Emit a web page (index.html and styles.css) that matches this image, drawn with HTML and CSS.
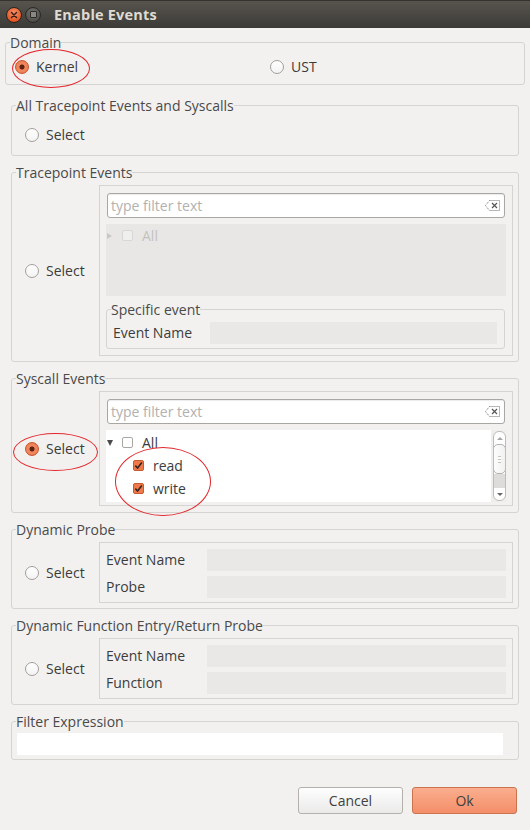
FILE: index.html
```html
<!DOCTYPE html>
<html>
<head>
<meta charset="utf-8">
<title>Enable Events</title>
<link rel="stylesheet" href="styles.css">
</head>
<body>
<div class="window">
  <div class="titlebar">
    <span class="wbtn close"><svg width="8" height="8" viewBox="0 0 8 8"><path d="M1.5 1.5 L6.5 6.5 M6.5 1.5 L1.5 6.5" stroke="#3b2119" stroke-width="1.5" stroke-linecap="round"/></svg></span>
    <span class="wbtn max"><span class="maxsq"></span></span>
    <span class="title">Enable Events</span>
  </div>

  <fieldset class="group domain">
    <legend>Domain</legend>
    <div class="domain-row">
      <label class="radio-item"><span class="radio checked"></span>Kernel</label>
      <label class="radio-item"><span class="radio"></span>UST</label>
    </div>
  </fieldset>

  <div class="groups">
    <fieldset class="group">
      <legend>All Tracepoint Events and Syscalls</legend>
      <div class="single-row">
        <label class="radio-item"><span class="radio"></span>Select</label>
      </div>
    </fieldset>

    <fieldset class="group">
      <legend>Tracepoint Events</legend>
      <div class="split">
        <div class="select-cell"><label class="radio-item"><span class="radio"></span>Select</label></div>
        <div class="panel">
          <div class="filter">
            <span class="placeholder">type filter text</span>
            <svg class="clear" width="15" height="11" viewBox="0 0 15 11"><path d="M4.5 0.5 H14.5 V10.5 H4.5 L0.5 5.5 Z" fill="none" stroke="#6e6e6e" stroke-dasharray="1 1"/><path d="M7 3 L12 8 M12 3 L7 8" stroke="#555" stroke-width="1.2"/></svg>
          </div>
          <div class="tree disabled">
            <div class="row"><span class="twisty right"></span><span class="cb dim"></span><span class="dimtext">All</span></div>
          </div>
          <fieldset class="group specific">
            <legend>Specific event</legend>
            <div class="field-row">
              <span class="lbl">Event Name</span>
              <span class="field"></span>
            </div>
          </fieldset>
        </div>
      </div>
    </fieldset>

    <fieldset class="group">
      <legend>Syscall Events</legend>
      <div class="split syscall">
        <div class="select-cell"><label class="radio-item"><span class="radio checked"></span>Select</label></div>
        <div class="panel tight">
          <div class="filter">
            <span class="placeholder">type filter text</span>
            <svg class="clear" width="15" height="11" viewBox="0 0 15 11"><path d="M4.5 0.5 H14.5 V10.5 H4.5 L0.5 5.5 Z" fill="none" stroke="#6e6e6e" stroke-dasharray="1 1"/><path d="M7 3 L12 8 M12 3 L7 8" stroke="#555" stroke-width="1.2"/></svg>
          </div>
          <div class="tree active">
            <div class="list">
              <div class="row"><span class="twisty down"></span><span class="cb"></span><span>All</span></div>
              <div class="row child"><span class="cb checked"><svg width="11" height="11" viewBox="0 0 11 11"><path d="M2.3 5.6 L4.6 8 L8.8 2.6" fill="none" stroke="#33251f" stroke-width="1.6"/></svg></span><span>read</span></div>
              <div class="row child"><span class="cb checked"><svg width="11" height="11" viewBox="0 0 11 11"><path d="M2.3 5.6 L4.6 8 L8.8 2.6" fill="none" stroke="#33251f" stroke-width="1.6"/></svg></span><span>write</span></div>
            </div>
            <div class="sbar-col">
              <div class="sbar">
                <span class="sb-up"></span>
                <span class="sb-thumb"><span class="grip"></span></span>
                <span class="sb-fill"></span>
                <span class="sb-down"></span>
              </div>
            </div>
          </div>
        </div>
      </div>
    </fieldset>

    <fieldset class="group">
      <legend>Dynamic Probe</legend>
      <div class="split">
        <div class="select-cell"><label class="radio-item"><span class="radio"></span>Select</label></div>
        <div class="panel fields">
          <span class="lbl">Event Name</span><span class="field"></span>
          <span class="lbl">Probe</span><span class="field"></span>
        </div>
      </div>
    </fieldset>

    <fieldset class="group">
      <legend>Dynamic Function Entry/Return Probe</legend>
      <div class="split">
        <div class="select-cell"><label class="radio-item"><span class="radio"></span>Select</label></div>
        <div class="panel fields">
          <span class="lbl">Event Name</span><span class="field"></span>
          <span class="lbl">Function</span><span class="field"></span>
        </div>
      </div>
    </fieldset>

    <fieldset class="group">
      <legend>Filter Expression</legend>
      <div class="filter-expr"><span class="expr-input"></span></div>
    </fieldset>
  </div>

  <div class="buttons">
    <button class="btn cancel">Cancel</button>
    <button class="btn ok">Ok</button>
  </div>

  <span class="annot annot-kernel"></span>
  <span class="annot annot-select"></span>
  <span class="annot annot-rw"></span>
</div>
</body>
</html>
```

FILE: styles.css
```css
* { box-sizing: border-box; }
html, body { margin: 0; padding: 0; }
body {
  width: 530px;
  height: 830px;
  overflow: hidden;
  background: #f2f1f0;
  font-family: "Open Sans", "Noto Sans", sans-serif;
  font-size: 14px;
  color: #3c3c3c;
}
.window {
  position: relative;
  height: 830px;
  display: flex;
  flex-direction: column;
}

/* title bar */
.titlebar {
  height: 28px;
  flex: none;
  background: linear-gradient(#57544e, #3c3b37);
  border-top: 1px solid #34332f;
  display: flex;
  align-items: center;
  padding-left: 6px;
  gap: 3px;
}
.wbtn {
  width: 16px;
  height: 16px;
  border-radius: 50%;
  display: flex;
  align-items: center;
  justify-content: center;
}
.wbtn.close {
  background: radial-gradient(circle at 50% 35%, #f7916a, #e25520 75%);
  border: 1px solid #2e221d;
}
.wbtn.max {
  background: radial-gradient(circle at 50% 35%, #77756f, #4f4d49 75%);
  border: 1px solid #2a2926;
}
.maxsq {
  width: 7px;
  height: 7px;
  border: 1px solid #2b2a27;
  border-radius: 1px;
  background: #8a8883;
}
.title {
  margin-left: 10px;
  color: #dfdbd2;
  font-weight: bold;
  font-size: 14.5px;
  letter-spacing: 0.2px;
}

/* group boxes */
.group {
  margin: 0;
  padding: 0;
  min-width: 0;
  border: 1px solid #d6d4d0;
  border-radius: 3px;
}
.group > legend {
  padding: 0;
  margin-left: 4px;
  height: 16px;
  line-height: 17px;
  color: #4a4a4a;
}
.domain { margin: 6px 5px 0; }
.domain-row {
  height: 34px;
  display: grid;
  grid-template-columns: 255px 1fr;
  align-items: center;
  padding-left: 9px;
}
.groups {
  margin-top: 12px;
  padding: 0 11px;
  display: flex;
  flex-direction: column;
  gap: 8px;
}
.single-row {
  height: 42px;
  display: flex;
  align-items: center;
  padding-left: 13px;
  padding-top: 1px;
}

/* radios */
.radio-item {
  display: flex;
  align-items: center;
  gap: 7px;
  line-height: 16px;
}
.radio {
  width: 14px;
  height: 14px;
  flex: none;
  border-radius: 50%;
  border: 1px solid #a3a09b;
  background: linear-gradient(#ffffff, #f3f3f3);
}
.radio.checked {
  border-color: #c9542b;
  background: radial-gradient(circle, #5a2514 0 2.2px, #ef7d53 2.8px, #f08a62 4px, #e9693d 100%);
}

/* split groups */
.split {
  display: grid;
  grid-template-columns: 87px 1fr;
  padding: 5px 5px 5px 0;
}
.split.syscall { padding-bottom: 6px; }
.select-cell {
  display: flex;
  align-items: center;
  padding-left: 13px;
}
.panel {
  border: 1px solid #d6d4d0;
  padding: 7px 6px 6px;
  display: flex;
  flex-direction: column;
}
.panel.tight { padding-bottom: 3px; }
.panel.fields {
  display: grid;
  grid-template-columns: 101px 1fr;
  row-gap: 5px;
  align-items: center;
  padding: 6px 6px 4px;
}

/* filter box */
.filter {
  margin: 0 1px;
  height: 25px;
  border: 1px solid #a9a7a3;
  border-radius: 3px;
  background: #fff;
  box-shadow: inset 0 1px 1px rgba(0,0,0,0.08);
  display: flex;
  align-items: center;
  justify-content: space-between;
  padding: 0 4px 0 3px;
}
.placeholder { color: #b2b1af; }
.clear { flex: none; }

/* trees */
.tree {
  margin-top: 6px;
  height: 72px;
}
.tree.disabled { background: #e8e7e5; }
.tree.active {
  display: grid;
  grid-template-columns: 1fr 15px;
  background: #efeeec;
}
.list { background: #fff; padding-top: 1px; }
.row {
  height: 23px;
  display: flex;
  align-items: center;
  padding-left: 1px;
}
.row.child { padding-left: 27px; }
.twisty { width: 6px; flex: none; margin-right: 9px; }
.twisty.down {
  height: 0;
  border-left: 3px solid transparent;
  border-right: 3px solid transparent;
  border-top: 6px solid #4a4a4a;
}
.twisty.right {
  height: 0;
  border-top: 3.5px solid transparent;
  border-bottom: 3.5px solid transparent;
  border-left: 5px solid #c9c8c6;
}
.cb {
  width: 11px;
  height: 11px;
  flex: none;
  border: 1px solid #a9a7a3;
  border-radius: 2px;
  background: #fff;
  margin-right: 9px;
  display: flex;
}
.cb.dim { border-color: #d8d7d5; background: #efefee; }
.cb.checked {
  border-color: #c65a31;
  background: #f0794a;
}
.cb svg { margin: -1px; }
.dimtext { color: #c3c2c0; }

/* scrollbar */
.sbar-col {
  padding: 1px 0 1px 2px;
}
.sbar {
  height: 70px;
  width: 13px;
  border: 1px solid #bebcb8;
  border-radius: 6px;
  background: #fff;
  display: flex;
  flex-direction: column;
  align-items: stretch;
  overflow: hidden;
}
.sb-up, .sb-down {
  display: flex;
  justify-content: center;
  align-items: center;
}
.sb-up { height: 12px; }
.sb-down { flex: 1; }
.sb-up::before {
  content: "";
  border-left: 3px solid transparent;
  border-right: 3px solid transparent;
  border-bottom: 3px solid #a8a6a2;
}
.sb-down::before {
  content: "";
  border-left: 3px solid transparent;
  border-right: 3px solid transparent;
  border-top: 3px solid #6a6864;
}
.sb-thumb {
  height: 30px;
  border: 1px solid #b3b1ad;
  border-radius: 5px;
  background: linear-gradient(90deg, #fdfdfd, #f1f1f0);
  margin: 0 -1px;
  display: flex;
  justify-content: center;
  align-items: center;
}
.grip {
  width: 3px;
  height: 7px;
  border-top: 1px solid #c4c2be;
  border-bottom: 1px solid #c4c2be;
  background: linear-gradient(#fff 0 2px, #c4c2be 2px 3px, #fff 3px);
}
.sb-fill { height: 14px; background: #dddcda; }

/* fields */
.specific {
  margin-top: 5px;
  margin-right: 1px;
}
.field-row {
  display: grid;
  grid-template-columns: 97px 1fr;
  align-items: center;
  padding: 5px 7px 4px 6px;
}
.field {
  height: 22px;
  background: #e9e8e6;
}
.lbl { line-height: 16px; padding-bottom: 1px; }
.filter-expr { padding: 4px 0 4px 5px; }
.expr-input {
  display: block;
  width: 486px;
  height: 22px;
  background: #ffffff;
}

/* buttons */
.buttons {
  margin-top: 27px;
  display: flex;
  justify-content: flex-end;
  gap: 9px;
  padding-right: 13px;
}
.btn {
  width: 105px;
  height: 27px;
  border-radius: 3px;
  font-family: "Open Sans", "Noto Sans", sans-serif;
  font-size: 14px;
  color: #3f3f3f;
  padding: 0;
}
.btn.cancel {
  border: 1px solid #b4b1ac;
  background: linear-gradient(#fefefe, #ebeae9);
}
.btn.ok {
  border: 1px solid #c9734f;
  background: linear-gradient(#faae8e, #f48e69);
}

/* red annotation ellipses */
.annot {
  position: absolute;
  border: 1px solid #e3262b;
  border-radius: 50%;
}
.annot-kernel { left: 12px; top: 49px; width: 78px; height: 39px; }
.annot-select { left: 13px; top: 433px; width: 85px; height: 38px; }
.annot-rw { left: 115px; top: 447px; width: 96px; height: 69px; }
```
